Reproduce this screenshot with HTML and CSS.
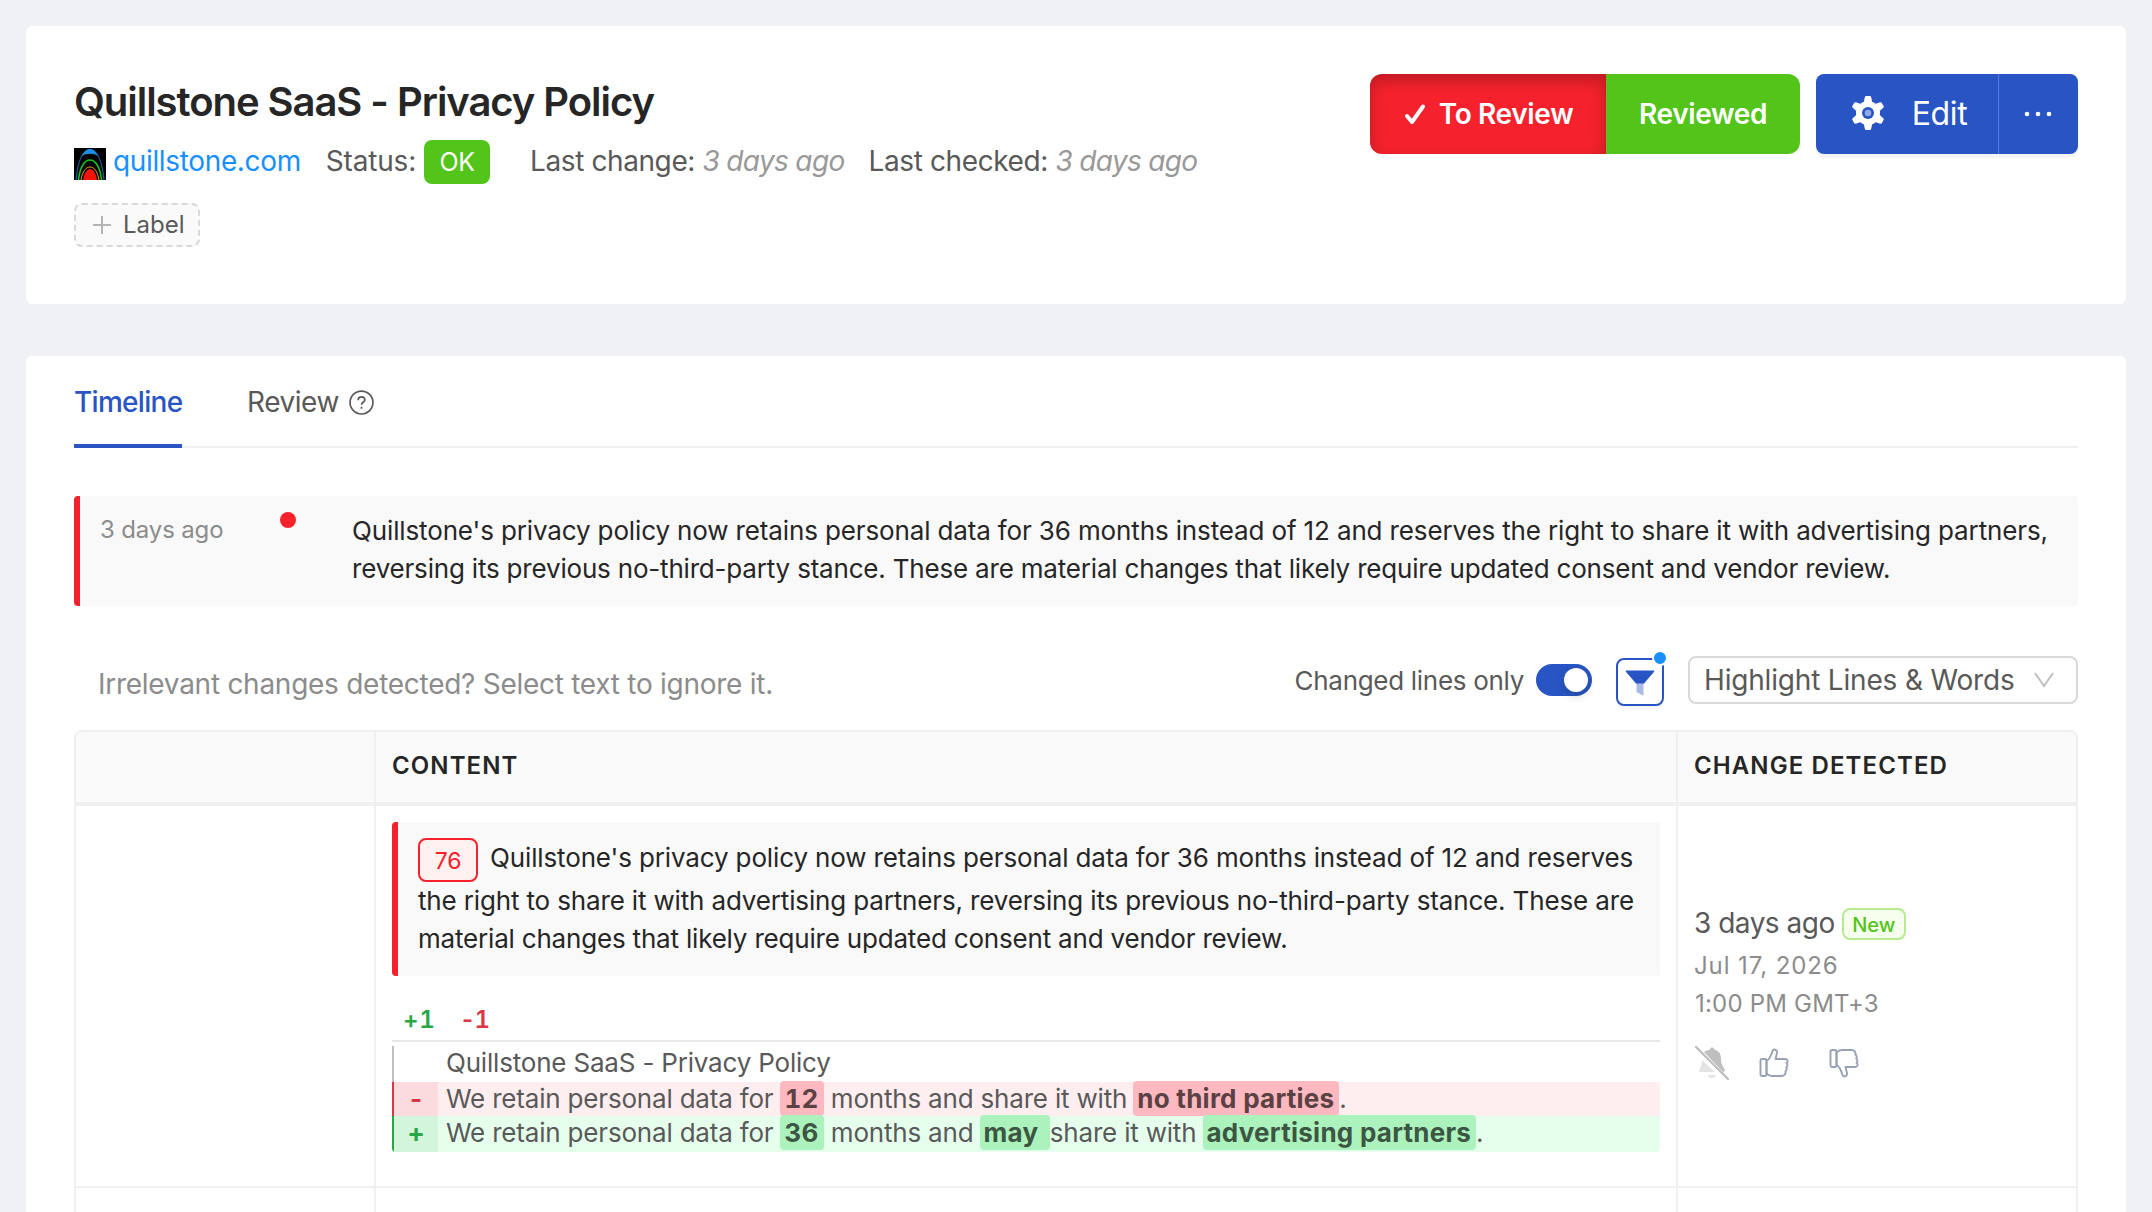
FILE: index.html
```
<!DOCTYPE html>
<html lang="en">
<head>
  <meta charset="UTF-8" />
  <meta name="viewport" content="width=device-width, initial-scale=1.0">
  <title>Quillstone SaaS - Privacy Policy</title>
  <link rel="stylesheet" href="styles.css">
</head>
<body>
  <header class="card page-head">
    <div class="head-info">
      <h1>Quillstone SaaS - Privacy Policy</h1>
      <div class="meta">
        <svg class="favicon" viewBox="0 0 32 32">
          <rect width="32" height="32" fill="#000"/>
          <path d="M2 32C4 12 9 2 16 2s12 10 14 30" fill="none" stroke="#1260a0" stroke-width="1.2"/>
          <path d="M8 8C11 2 13 1 16 1s5 1 8 7c-4-3-12-3-16 0z" fill="#1b8fe6"/>
          <path d="M4.500 32C6 18 11 12 16 12s10 6 11.500 20" fill="none" stroke="#14c81e" stroke-width="1.500"/>
          <path d="M7 32C8.500 23 12 19 16 19s7.500 4 9 13" fill="none" stroke="#f2a11a" stroke-width="1"/>
          <path d="M9 32c1-7 4-11 7-11s6 4 7 11z" fill="#f01408"/>
        </svg>
        <a class="site" href="#">quillstone.com</a>
        <span class="status">Status:</span>
        <span class="tag-ok">OK</span>
        <span class="change">Last change: <i>3 days ago</i></span>
        <span class="checked">Last checked: <i>3 days ago</i></span>
      </div>
      <button class="label-btn">
        <svg viewBox="0 0 20 20"><path d="M10 1v18M1 10h18" stroke="#b4b4b4" stroke-width="2"/></svg>
        <span>Label</span>
      </button>
    </div>
    <div class="actions">
      <div class="group">
        <button class="btn to-review">
          <svg viewBox="0 0 24 24"><path d="M4 14l5 6L20 4.500" fill="none" stroke="#fff" stroke-width="4" stroke-linecap="round" stroke-linejoin="round"/></svg>
          <span>To Review</span>
        </button>
        <button class="btn reviewed"><span>Reviewed</span></button>
      </div>
      <div class="group blue">
        <button class="btn edit">
          <svg viewBox="0 0 34 34">
            <g fill="#fff">
              <circle cx="17" cy="17" r="12"/>
              <path id="tooth" d="M13.800 1.200Q14 0 15.300 0h3.400q1.300 0 1.500 1.200L22 10v14l-1.800 8.800Q20 34 18.700 34h-3.400q-1.300 0-1.500-1.200L12 24V10z"/>
              <use href="#tooth" transform="rotate(60 17 17)"/>
              <use href="#tooth" transform="rotate(120 17 17)"/>
            </g>
            <circle cx="17" cy="17" r="6" fill="#2855c3"/>
            <circle cx="17" cy="17" r="3.300" fill="#8fa9e2"/>
          </svg>
          <span>Edit</span>
        </button>
        <button class="btn more">
          <svg viewBox="0 0 28 6"><g fill="#fff"><circle cx="3" cy="3" r="2.300"/><circle cx="14" cy="3" r="2.300"/><circle cx="25" cy="3" r="2.300"/></g></svg>
        </button>
      </div>
    </div>
  </header>

  <main class="card">
    <nav class="tabs">
      <a class="tab active-tab">Timeline</a>
      <a class="tab">Review
        <svg viewBox="0 0 24 24" fill="none" stroke="#595959" stroke-width="1.600">
          <circle cx="12" cy="12" r="11"/>
          <path d="M8.800 9.800c0-2 1.400-3.200 3.200-3.200s3.200 1.200 3.200 2.900c0 2.300-3.200 2.300-3.200 4.700"/>
          <path d="M12 16v2"/>
        </svg>
      </a>
    </nav>

    <section class="summary">
      <span class="when">3 days ago</span>
      <span class="dot"></span>
      <div>
        <p>Quillstone's privacy policy now retains personal data for 36 months instead of 12 and reserves the right to share it with advertising partners,</p>
        <p class="tight">reversing its previous no-third-party stance. These are material changes that likely require updated consent and vendor review.</p>
      </div>
    </section>

    <div class="toolbar">
      <span class="hint">Irrelevant changes detected? Select text to ignore it.</span>
      <span class="switch-label">Changed lines only</span>
      <span class="switch"></span>
      <button class="filter">
        <svg viewBox="0 0 30 26"><path d="M11.500 13h7v11.300c0 .9-.8 1.300-1.600.800L11.500 22z" fill="#a9bbe7"/><path d="M1.500 0.500h27c.8 0 1 .6.600 1.200L19 13.500h-8L.900 1.700C.5 1.100.700.500 1.500.500z" fill="#2855c3"/></svg>
        <span class="badge"></span>
      </button>
      <div class="select">
        <span>Highlight Lines &amp; Words</span>
        <svg viewBox="0 0 20 16"><path d="M1 1l9 13 9-13" fill="none" stroke="#bfbfbf" stroke-width="2"/></svg>
      </div>
    </div>

    <div class="table">
      <div class="th"></div>
      <div class="th">Content</div>
      <div class="th">Change detected</div>

      <div class="td"></div>
      <div class="td">
        <div class="note">
          <p><span class="score">76</span><span>Quillstone's privacy policy now retains personal data for 36 months instead of 12 and reserves</span></p>
          <p>the right to share it with advertising partners, reversing its previous no-third-party stance. These are</p>
          <p class="tight">material changes that likely require updated consent and vendor review.</p>
        </div>
        <div class="counts"><span class="plus">+1</span><span class="minus">-1</span></div>
        <div class="diff">
          <div class="line"><span class="sign"></span><span class="code">Quillstone SaaS - Privacy Policy</span></div>
          <div class="line del"><span class="sign">-</span><span class="code">We retain personal data for <b class="num">12</b> months and share it with <b>no third parties</b>.</span></div>
          <div class="line add"><span class="sign">+</span><span class="code">We retain personal data for <b class="num">36</b> months and <b>may </b>share it with <b>advertising partners</b>.</span></div>
        </div>
      </div>
      <div class="td detected">
        <div class="ago"><span>3 days ago</span><span class="new">New</span></div>
        <div class="date">Jul 17, 2026</div>
        <div class="date time">1:00 PM GMT+3</div>
        <div class="icons">
          <svg class="bell" viewBox="0 0 34 34">
            <path d="M7 14C7 21 4 23 4 26h16z" fill="#e3e3e3"/>
            <path d="M13 29h8c-.5 4-7.500 4-8 0z" fill="#e3e3e3"/>
            <path d="M9 6c2-1.500 4-2 6-2.500 0-2.600 4-2.600 4 0C24 4.500 26 8 26 13c0 7 4 9 4 12l-2 1z" fill="#bfbfbf"/>
            <path d="M1 1l32 32" stroke="#bfbfbf" stroke-width="2.400" stroke-linecap="round"/>
          </svg>
          <svg class="thumb" viewBox="0 0 30 30" fill="none" stroke="#98a2b3" stroke-width="1.900" stroke-linejoin="round">
            <rect x="1.500" y="11" width="6" height="17" rx="1.500"/>
            <path d="M7.500 13c4-2 4.500-6 6-10 1-2.500 5-1.500 4.500 2L16.500 11H26c3 0 3.300 3 1.500 4.300 1.500 1.200 1.200 3.200-.3 4.200 1 1.500.5 3-.7 3.800.5 2.700-1.300 4.700-4 4.700H13c-2.500 0-4-1-5.500-2.500z"/>
          </svg>
          <svg class="thumb down" viewBox="0 0 30 30" fill="none" stroke="#98a2b3" stroke-width="1.900" stroke-linejoin="round">
            <rect x="1.500" y="11" width="6" height="17" rx="1.500"/>
            <path d="M7.500 13c4-2 4.500-6 6-10 1-2.500 5-1.500 4.500 2L16.500 11H26c3 0 3.300 3 1.500 4.300 1.500 1.200 1.200 3.200-.3 4.200 1 1.500.5 3-.7 3.800.5 2.700-1.300 4.700-4 4.700H13c-2.500 0-4-1-5.500-2.500z"/>
          </svg>
        </div>
      </div>

      <div class="td"></div>
      <div class="td"></div>
      <div class="td"></div>
    </div>
  </main>
</body>
</html>
```

FILE: styles.css
```
* {
  box-sizing: border-box;
}
body {
  margin: 0;
  padding: 26px 26px 0;
  font-family: Inter, sans-serif;
  font-size: 26px;
  background: #f0f1f5;
  color: #595959;
}
h1, p {
  margin: 0;
}
button {
  font: inherit;
  border: none;
  padding: 0;
}
span, a, p {
  white-space: nowrap;
}
svg {
  flex: none;
  display: block;
}
.card {
  background: #fff;
  border-radius: 6px;
  padding: 0 48px;
}

/* page header */
.page-head {
  height: 278px;
  padding-top: 48px;
  margin-bottom: 52px;
  display: flex;
  justify-content: space-between;
}
h1 {
  font-size: 40px;
  line-height: 56px;
  font-weight: 600;
  letter-spacing: -1.05px;
  color: #262626;
}
.meta {
  display: flex;
  align-items: center;
  height: 44px;
  margin-top: 10px;
  font-size: 28px;
  line-height: 40px;
  letter-spacing: -0.35px;
}
.favicon {
  width: 32px;
  height: 32px;
  margin: 4px 7px 0 0;
}
.site, .status, .change, .checked {
  padding-bottom: 3px;
}
.site {
  color: #1890ff;
  text-decoration: none;
  margin-right: 25px;
}
.status {
  letter-spacing: -0.2px;
}
.change, .checked {
  letter-spacing: -0.4px;
}
.meta i {
  color: #999;
  letter-spacing: -0.65px;
}
.tag-ok {
  width: 66px;
  height: 44px;
  margin: 0 40px 0 8px;
  border-radius: 8px;
  background: #52c41a;
  color: #fff;
  font-size: 25px;
  line-height: 44px;
  text-align: center;
}
.change {
  margin-right: 24px;
}
.label-btn {
  display: flex;
  align-items: center;
  width: 126px;
  height: 44px;
  margin-top: 19px;
  padding: 0 0 1px 16px;
  border: 2px dashed #d9d9d9;
  border-radius: 8px;
  background: #fafafa;
  color: #595959;
  font-size: 24px;
}
.label-btn svg {
  width: 20px;
  height: 20px;
  margin-right: 11px;
}
.actions {
  display: flex;
  gap: 16px;
  height: 80px;
}
.group {
  display: flex;
  border-radius: 12px;
  overflow: hidden;
}
.btn {
  display: flex;
  align-items: center;
  justify-content: center;
  color: #fff;
  font-size: 28px;
  font-weight: 600;
  letter-spacing: -0.35px;
}
.to-review {
  width: 236px;
  gap: 12px;
  background: #f5222d;
  box-shadow: inset 0 6px 16px rgba(0,0,0,0.25);
}
.to-review svg {
  width: 24px;
  height: 24px;
}
.reviewed {
  width: 194px;
  background: #52c41a;
}
.blue {
  border-radius: 8px;
  box-shadow: 0 4px 0 rgba(0,0,0,0.045);
}
.edit {
  width: 183px;
  gap: 27px;
  padding: 0 0 2px 4px;
  background: #2855c3;
  border-right: 1px solid #537be0;
  font-size: 32px;
  font-weight: 400;
}
.edit svg {
  width: 34px;
  height: 34px;
}
.more {
  width: 79px;
  padding-right: 2px;
  background: #2855c3;
}
.more svg {
  width: 28px;
  height: 6px;
}

/* tabs */
main {
  height: 856px;
  overflow: hidden;
}
main.card {
  border-radius: 6px 6px 0 0;
}
.tabs {
  display: flex;
  gap: 65px;
  height: 92px;
  border-bottom: 2px solid #f0f0f0;
  font-size: 28px;
  letter-spacing: -0.45px;
}
.tab {
  display: flex;
  gap: 10px;
  height: 92px;
  align-items: center;
}
.tab svg {
  width: 25px;
  height: 25px;
}
.active-tab {
  width: 108px;
  padding-top: 4px;
  color: #2855c3;
  font-weight: 500;
  letter-spacing: -0.7px;
  border-bottom: 4px solid #2855c3;
}

/* summary */
.summary {
  display: flex;
  height: 110px;
  margin-top: 48px;
  padding-top: 16px;
  border-left: 6px solid #f5222d;
  border-radius: 4px;
  background: #f9f9f9;
}
.when {
  width: 180px;
  padding-left: 20px;
  font-size: 24px;
  line-height: 36px;
  letter-spacing: -0.15px;
  color: #8c8c8c;
}
.dot {
  width: 16px;
  height: 16px;
  margin: 0 56px 0 20px;
  border-radius: 50%;
  background: #f5222d;
}
.summary p, .note p {
  line-height: 38px;
  letter-spacing: -0.135px;
  color: #262626;
}
.note p {
  letter-spacing: -0.15px;
}
.summary .tight, .note .tight {
  letter-spacing: -0.19px;
}
.note p:first-child {
  letter-spacing: -0.135px;
}

/* toolbar */
.toolbar {
  display: flex;
  height: 124px;
  padding-left: 24px;
  align-items: center;
}
.hint {
  margin-right: auto;
  padding-top: 32px;
  color: #8c8c8c;
  font-size: 28px;
  letter-spacing: -0.27px;
}
.switch-label {
  margin-top: 25px;
  letter-spacing: -0.3px;
}
.switch {
  width: 56px;
  height: 32px;
  margin: 24px 24px 0 12px;
  padding: 4px;
  border-radius: 16px;
  background: #2855c3;
}
.switch::after {
  content: "";
  display: block;
  width: 24px;
  height: 24px;
  margin-left: 24px;
  border-radius: 50%;
  background: #fff;
  box-shadow: 0 4px 8px rgba(0,35,11,0.2);
}
.filter {
  position: relative;
  display: flex;
  align-items: center;
  justify-content: center;
  width: 48px;
  height: 48px;
  margin: 28px 24px 0 0;
  border: 2px solid #2855c3;
  border-radius: 8px;
  background: #fff;
  box-shadow: 0 4px 0 rgba(0,0,0,0.03);
}
.filter svg {
  width: 30px;
  height: 26px;
  margin-top: 2px;
}
.badge {
  position: absolute;
  top: -10px;
  right: -6px;
  width: 16px;
  height: 16px;
  border: 2px solid #fff;
  border-radius: 50%;
  background: #1890ff;
}
.select {
  display: flex;
  align-items: center;
  justify-content: space-between;
  width: 390px;
  height: 48px;
  margin-top: 24px;
  padding: 0 22px 0 14px;
  border: 2px solid #d9d9d9;
  border-radius: 8px;
  font-size: 28px;
  letter-spacing: -0.18px;
}
.select svg {
  width: 20px;
  height: 16px;
}

/* table */
.table {
  display: grid;
  grid-template-columns: 302px 1302px 400px;
  grid-template-rows: 76px 382px 1fr;
  height: 482px;
}
.th {
  padding: 0 16px;
  border-top: 2px solid #f0f0f0;
  border-right: 2px solid #f0f0f0;
  border-bottom: 4px solid #f0f0f0;
  background: #fafafa;
  color: #262626;
  font-size: 24px;
  font-weight: 600;
  line-height: 68px;
  letter-spacing: 1.1px;
  text-transform: uppercase;
}
.th:nth-child(3n+1), .td:nth-child(3n+1) {
  border-left: 2px solid #f0f0f0;
}
.th:first-child {
  border-top-left-radius: 8px;
}
.th:nth-child(3) {
  border-top-right-radius: 8px;
}
.td {
  padding: 16px;
  border-right: 2px solid #f0f0f0;
  border-bottom: 2px solid #f0f0f0;
}
.td:nth-last-child(-n+3) {
  padding: 0;
  border-bottom: none;
}
.note {
  height: 154px;
  padding: 16px 20px;
  border-left: 6px solid #f5222d;
  border-radius: 4px;
  background: #f9f9f9;
}
.note p:first-child {
  display: flex;
  height: 44px;
  line-height: 40px;
}
.score {
  flex: none;
  width: 60px;
  height: 44px;
  margin-right: 12px;
  border: 2px solid #f5222d;
  border-radius: 8px;
  background: #fff1f0;
  color: #f5222d;
  font-size: 23px;
  line-height: 42px;
  text-align: center;
}
.counts {
  display: flex;
  gap: 24px;
  height: 66px;
  padding: 26px 0 0 11px;
  border-bottom: 2px solid #e8e8e8;
  font-size: 24px;
  font-weight: 600;
  line-height: 36px;
  letter-spacing: 0.8px;
  font-variant-numeric: tabular-nums;
}
.plus {
  color: #28a745;
}
.minus {
  color: #dc3545;
  letter-spacing: -0.8px;
}
.diff {
  margin-top: 4px;
}
.line {
  display: flex;
  height: 34px;
  line-height: 34px;
  border-left: 2px solid #bfbfbf;
}
.line:first-child, .line:last-child {
  height: 36px;
}
.line:last-child {
  border-radius: 0 0 4px 4px;
}
.sign {
  width: 44px;
  margin-right: 8px;
  font-weight: 700;
  text-align: center;
}
.code {
  letter-spacing: -0.19px;
}
.code b {
  margin-left: -1px;
  padding: 2px 5px 2px 4px;
  border-radius: 4px;
  letter-spacing: 0.25px;
}
.code .num {
  padding: 2px 5px;
  font-variant-numeric: tabular-nums;
}
.del {
  background: #ffeef0;
  border-color: #dc3545;
}
.del .sign {
  background: #fbdbde;
  color: #dc3545;
}
.del b {
  background: #fdb8c0;
  color: #5a4144;
}
.add {
  background: #e6ffed;
  border-color: #28a745;
}
.add .sign {
  background: #d2f5dc;
  color: #28a745;
}
.add b {
  background: #acf2bd;
  color: #3d5643;
}
.detected {
  padding-top: 95px;
}
.ago {
  display: flex;
  align-items: center;
  gap: 7px;
  height: 44px;
  font-size: 28px;
  letter-spacing: -0.5px;
}
.new {
  width: 64px;
  height: 32px;
  margin-top: 2px;
  border: 2px solid #b7eb8f;
  border-radius: 8px;
  background: #f6ffed;
  color: #52c41a;
  font-size: 20px;
  font-weight: 500;
  line-height: 30px;
  letter-spacing: 0;
  text-align: center;
}
.date {
  position: relative;
  top: 2px;
  font-size: 24px;
  line-height: 38px;
  letter-spacing: 0.9px;
  color: #8c8c8c;
}
.time {
  padding-left: 1px;
  letter-spacing: 0.2px;
}
.icons {
  display: flex;
  align-items: center;
  margin: 25px 0 0 1px;
}
.bell {
  width: 34px;
  height: 34px;
}
.thumb {
  width: 30px;
  height: 30px;
  margin-left: 30px;
}
.down {
  margin-left: 40px;
  transform: scaleY(-1);
}
```
